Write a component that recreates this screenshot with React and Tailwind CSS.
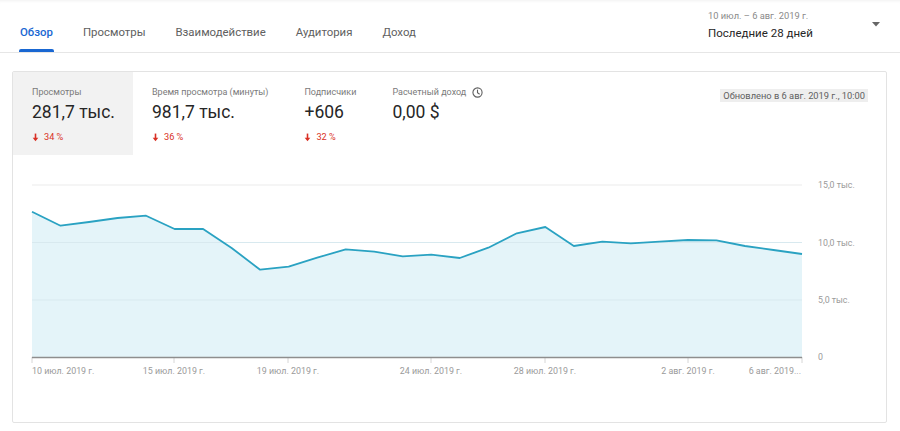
import React from "react";

const ys = [211.7,225.7,222,218,215.7,229,229,248,269.7,266.7,257.7,249.3,251.7,256.3,254.7,258,247.7,233.3,227,246,241.7,243.3,241.7,240,240.3,246,250,254];
const pts = ys.map((y, i) => [32 + (i * 770) / 27, y]);
const line = pts.map(([x, y]) => `${x.toFixed(2)},${y}`).join(" ");
const area = `32,357 ${line} 802,357`;

const ticks = [32, 174, 288, 431, 545, 688, 802];
const xLabels = [
  { x: 32, t: "10 июл. 2019 г.", a: "start" },
  { x: 174, t: "15 июл. 2019 г.", a: "middle" },
  { x: 288, t: "19 июл. 2019 г.", a: "middle" },
  { x: 431, t: "24 июл. 2019 г.", a: "middle" },
  { x: 545, t: "28 июл. 2019 г.", a: "middle" },
  { x: 688, t: "2 авг. 2019 г.", a: "middle" },
  { x: 801, t: "6 авг. 2019...", a: "end" },
];
const yLabels = [
  { y: 185, t: "15,0 тыс." },
  { y: 242.5, t: "10,0 тыс." },
  { y: 300, t: "5,0 тыс." },
  { y: 357, t: "0" },
];

function Down() {
  return (
    <svg width="7" height="9" viewBox="0 0 8 10" className="shrink-0">
      <path d="M4 0.5 V7.5" stroke="#d93025" strokeWidth="1.8" />
      <path d="M0.8 5.2 L4 9.2 L7.2 5.2 Z" fill="#d93025" />
    </svg>
  );
}

function Metric({ label, value, change, active, icon }) {
  return (
    <div className={`flex flex-col pl-[19px] pr-[17px] pt-[14px] pb-[12px] ${active ? "bg-[#f2f2f2] min-w-[120px]" : ""}`}>
      <div className="flex items-center gap-[6px] text-[9px] leading-[12px] text-[#7a7a7a]">
        <span>{label}</span>
        {icon}
      </div>
      <div className="mt-[3px] text-[17.5px] leading-[22px] text-[#262626]">{value}</div>
      <div className="mt-[8px] flex h-[12px] items-center gap-[5px] text-[9.2px] leading-[12px] text-[#d93025]">
        {change && (
          <>
            <Down />
            <span>{change}</span>
          </>
        )}
      </div>
    </div>
  );
}

function ClockIcon() {
  return (
    <svg width="11" height="11" viewBox="0 0 12 12" fill="none" stroke="#5f5f5f" strokeWidth="1.2">
      <circle cx="6" cy="6" r="5" />
      <path d="M6 3.2 V6.2 L8 7.6" strokeLinecap="round" />
    </svg>
  );
}

export default function App() {
  return (
    <div className="w-[900px] h-[431px] bg-white overflow-hidden" style={{ fontFamily: "Roboto, 'Noto Sans', sans-serif" }}>
      <div className="flex h-[53px] border-b border-[#e6e6e6] shadow-[inset_0_3px_3px_-2px_rgba(0,0,0,0.06)]">
        <div className="flex gap-[30px] pl-[20px] text-[11.4px] text-[#606060]">
          {["Обзор", "Просмотры", "Взаимодействие", "Аудитория", "Доход"].map((t, i) => (
            <div key={t} className={`relative flex items-center pt-[14px] ${i === 0 ? "text-[#1967d2] font-medium" : ""}`}>
              {t}
              {i === 0 && <div className="absolute bottom-0 left-[-1px] right-[-1px] h-[3px] rounded-t-[2px] bg-[#1967d2]" />}
            </div>
          ))}
        </div>
        <div className="ml-auto flex pr-[20px]">
          <div className="flex w-[164px] flex-col pt-[10px]">
            <div className="text-[9.3px] leading-[12px] text-[#8a8a8a]">10 июл. – 6 авг. 2019 г.</div>
            <div className="mt-[3px] text-[11.5px] leading-[16px] text-[#262626]">Последние 28 дней</div>
          </div>
          <div className="pt-[22px]">
            <svg width="8" height="5" viewBox="0 0 8 5"><path d="M0 0 H8 L4 4.5 Z" fill="#666" /></svg>
          </div>
        </div>
      </div>

      <div className="mx-[12px] mt-[18px] mr-[13px] h-[352px] rounded-[2px] border border-[#e3e3e3] flex flex-col">
        <div className="flex items-start">
          <Metric label="Просмотры" value="281,7 тыс." change="34 %" active />
          <Metric label="Время просмотра (минуты)" value="981,7 тыс." change="36 %" />
          <Metric label="Подписчики" value="+606" change="32 %" />
          <Metric label="Расчетный доход" value="0,00 $" icon={<ClockIcon />} />
          <div className="ml-auto mr-[18px] mt-[17px] bg-[#eeeeee] px-[3px] text-[9.3px] leading-[13px] text-[#606060]">
            Обновлено в 6 авг. 2019 г., 10:00
          </div>
        </div>
        <svg width="873" height="235" className="block">
          <g transform="translate(-13,-155)">
            {[185, 242.5, 300].map((y) => (
              <line key={y} x1="32" x2="802" y1={y} y2={y} stroke="#ebebeb" strokeWidth="1" />
            ))}
            <polygon points={area} fill="#e4f4f9" />
            {[242.5, 300].map((y) => (
              <line key={y} x1="32" x2="802" y1={y} y2={y} stroke="#d8e9ef" strokeWidth="1" />
            ))}
            <polyline points={line} fill="none" stroke="#2aa2c2" strokeWidth="1.8" strokeLinejoin="round" />
            {ticks.map((x) => (
              <line key={x} x1={x} x2={x} y1="357" y2="363" stroke="#d6d6d6" strokeWidth="1" />
            ))}
            <line x1="32" x2="802" y1="357.5" y2="357.5" stroke="#8e8e8e" strokeWidth="1.5" />
            {yLabels.map((l) => (
              <text key={l.t} x="818" y={l.y} dominantBaseline="central" fontSize="8.8" fill="#9a9a9a">{l.t}</text>
            ))}
            {xLabels.map((l) => (
              <text key={l.t} x={l.x} y="371" textAnchor={l.a} dominantBaseline="central" fontSize="8.9" fill="#9a9a9a">{l.t}</text>
            ))}
          </g>
        </svg>
      </div>
    </div>
  );
}
